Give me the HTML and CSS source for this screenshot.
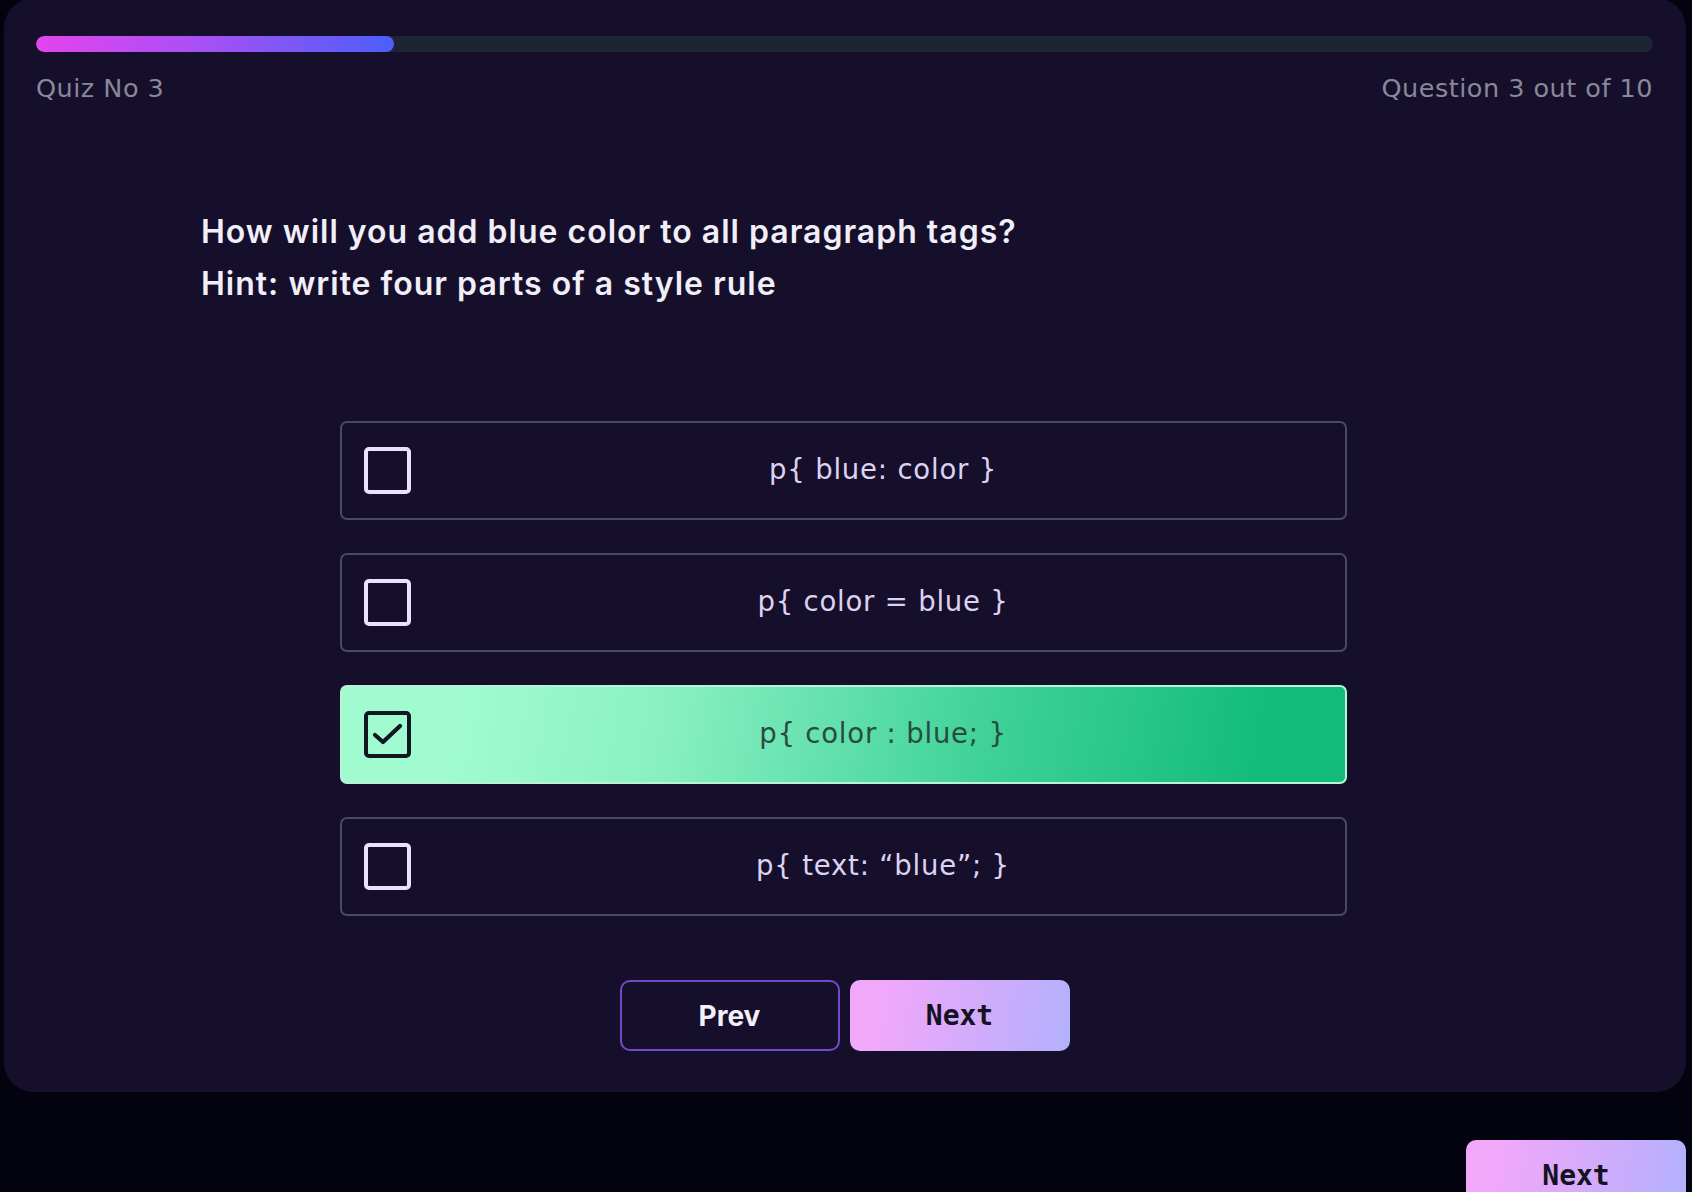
FILE: index.html
```html
<!DOCTYPE html>
<html lang="en">
<head>
<meta charset="utf-8">
<title>Quiz</title>
<link rel="stylesheet" href="styles.css">
</head>
<body>
<div class="page">
  <main class="card">
    <div class="progress"><div class="progress-fill" style="width:22.14%"></div></div>
    <div class="meta">
      <span>Quiz No 3</span>
      <span>Question 3 out of 10</span>
    </div>
    <div class="question">
      <p>How will you add blue color to all paragraph tags?</p>
      <p>Hint: write four parts of a style rule</p>
    </div>
    <div class="options">
      <label class="option">
        <span class="check"></span>
        <span class="option-text">p{ blue: color }</span>
      </label>
      <label class="option">
        <span class="check"></span>
        <span class="option-text">p{ color = blue }</span>
      </label>
      <label class="option selected">
        <span class="check">
          <svg viewBox="0 0 38 38" width="38" height="38"><polyline points="6,19 14,26 31,10" fill="none" stroke="#121620" stroke-width="4.2" stroke-linecap="round" stroke-linejoin="round"/></svg>
        </span>
        <span class="option-text">p{ color : blue; }</span>
      </label>
      <label class="option">
        <span class="check"></span>
        <span class="option-text">p{ text: “blue”; }</span>
      </label>
    </div>
    <div class="actions">
      <button class="btn btn-prev">Prev</button>
      <button class="btn btn-next">Next</button>
    </div>
  </main>
  <div class="footer">
    <button class="btn btn-next">Next</button>
  </div>
</div>
</body>
</html>
```

FILE: styles.css
```css
* { box-sizing: border-box; }
html, body {
  margin: 0;
  padding: 0;
  background: #03030f;
  height: 100%;
  overflow: hidden;
}
body {
  font-family: "Inter", "Liberation Sans", sans-serif;
}
.page {
  padding: 0 6px 0 4px;
}
.card {
  margin-top: -2px;
  background: #150f2c;
  border-radius: 30px;
  padding: 38px 33px 41px 32px;
}
.progress {
  height: 16px;
  border-radius: 8px;
  background: #1d2535;
  overflow: hidden;
}
.progress-fill {
  height: 100%;
  border-radius: 8px;
  background: linear-gradient(90deg, #e443ee 0%, #a950f4 45%, #4b5ffb 100%);
}
.meta {
  margin-top: 20px;
  display: flex;
  justify-content: space-between;
  font-family: "DejaVu Sans", "Inter", sans-serif;
  font-size: 25.5px;
  line-height: 32px;
  color: #8b879b;
  letter-spacing: 0.5px;
}
.question {
  margin: 102px 0 0 165px;
  color: #f1eef7;
  font-size: 32px;
  font-weight: 600;
  line-height: 52px;
  letter-spacing: 1px;
}
.question p { margin: 0; }
.options {
  width: 1007px;
  margin: 111px auto 0;
  display: flex;
  flex-direction: column;
  gap: 33px;
  position: relative;
  left: -1px;
}
.option {
  height: 99px;
  border: 2px solid #4d4767;
  border-radius: 7px;
  display: flex;
  align-items: center;
  padding-left: 22px;
  gap: 10px;
}
.check {
  width: 47px;
  height: 47px;
  border: 4px solid #ece0ff;
  border-radius: 5px;
  flex: none;
  display: flex;
  align-items: center;
  justify-content: center;
}
.option-text {
  flex: 1;
  text-align: center;
  font-family: "DejaVu Sans", "Inter", sans-serif;
  font-size: 27.5px;
  line-height: 32px;
  color: #ddd2f1;
  letter-spacing: 0.8px;
  padding-bottom: 4px;
}
.option.selected {
  border-color: #b8f3d6;
  background: linear-gradient(100deg, #a0fbd0 12%, #8af0c4 32%, #3dd197 65%, #12bb7b 92%);
}
.option.selected .check {
  border-color: #121620;
}
.option.selected .option-text {
  color: #2a4a42;
}
.actions {
  margin-top: 64px;
  display: flex;
  justify-content: center;
  gap: 10px;
}
.btn {
  width: 220px;
  height: 71px;
  border-radius: 10px;
  font-size: 28px;
  cursor: pointer;
}
.btn-prev {
  background: transparent;
  border: 2px solid #7a46c9;
  color: #f4eff9;
  font-family: "Inter", "Liberation Sans", sans-serif;
  font-weight: 700;
}
.btn-next {
  border: none;
  background: linear-gradient(100deg, #f1a8fb 15%, #d4abfb 55%, #b2b1fd 100%);
  color: #151223;
  font-family: "DejaVu Sans Mono", monospace;
  font-weight: 700;
}
.footer {
  margin-top: 48px;
  display: flex;
  justify-content: flex-end;
}
```
